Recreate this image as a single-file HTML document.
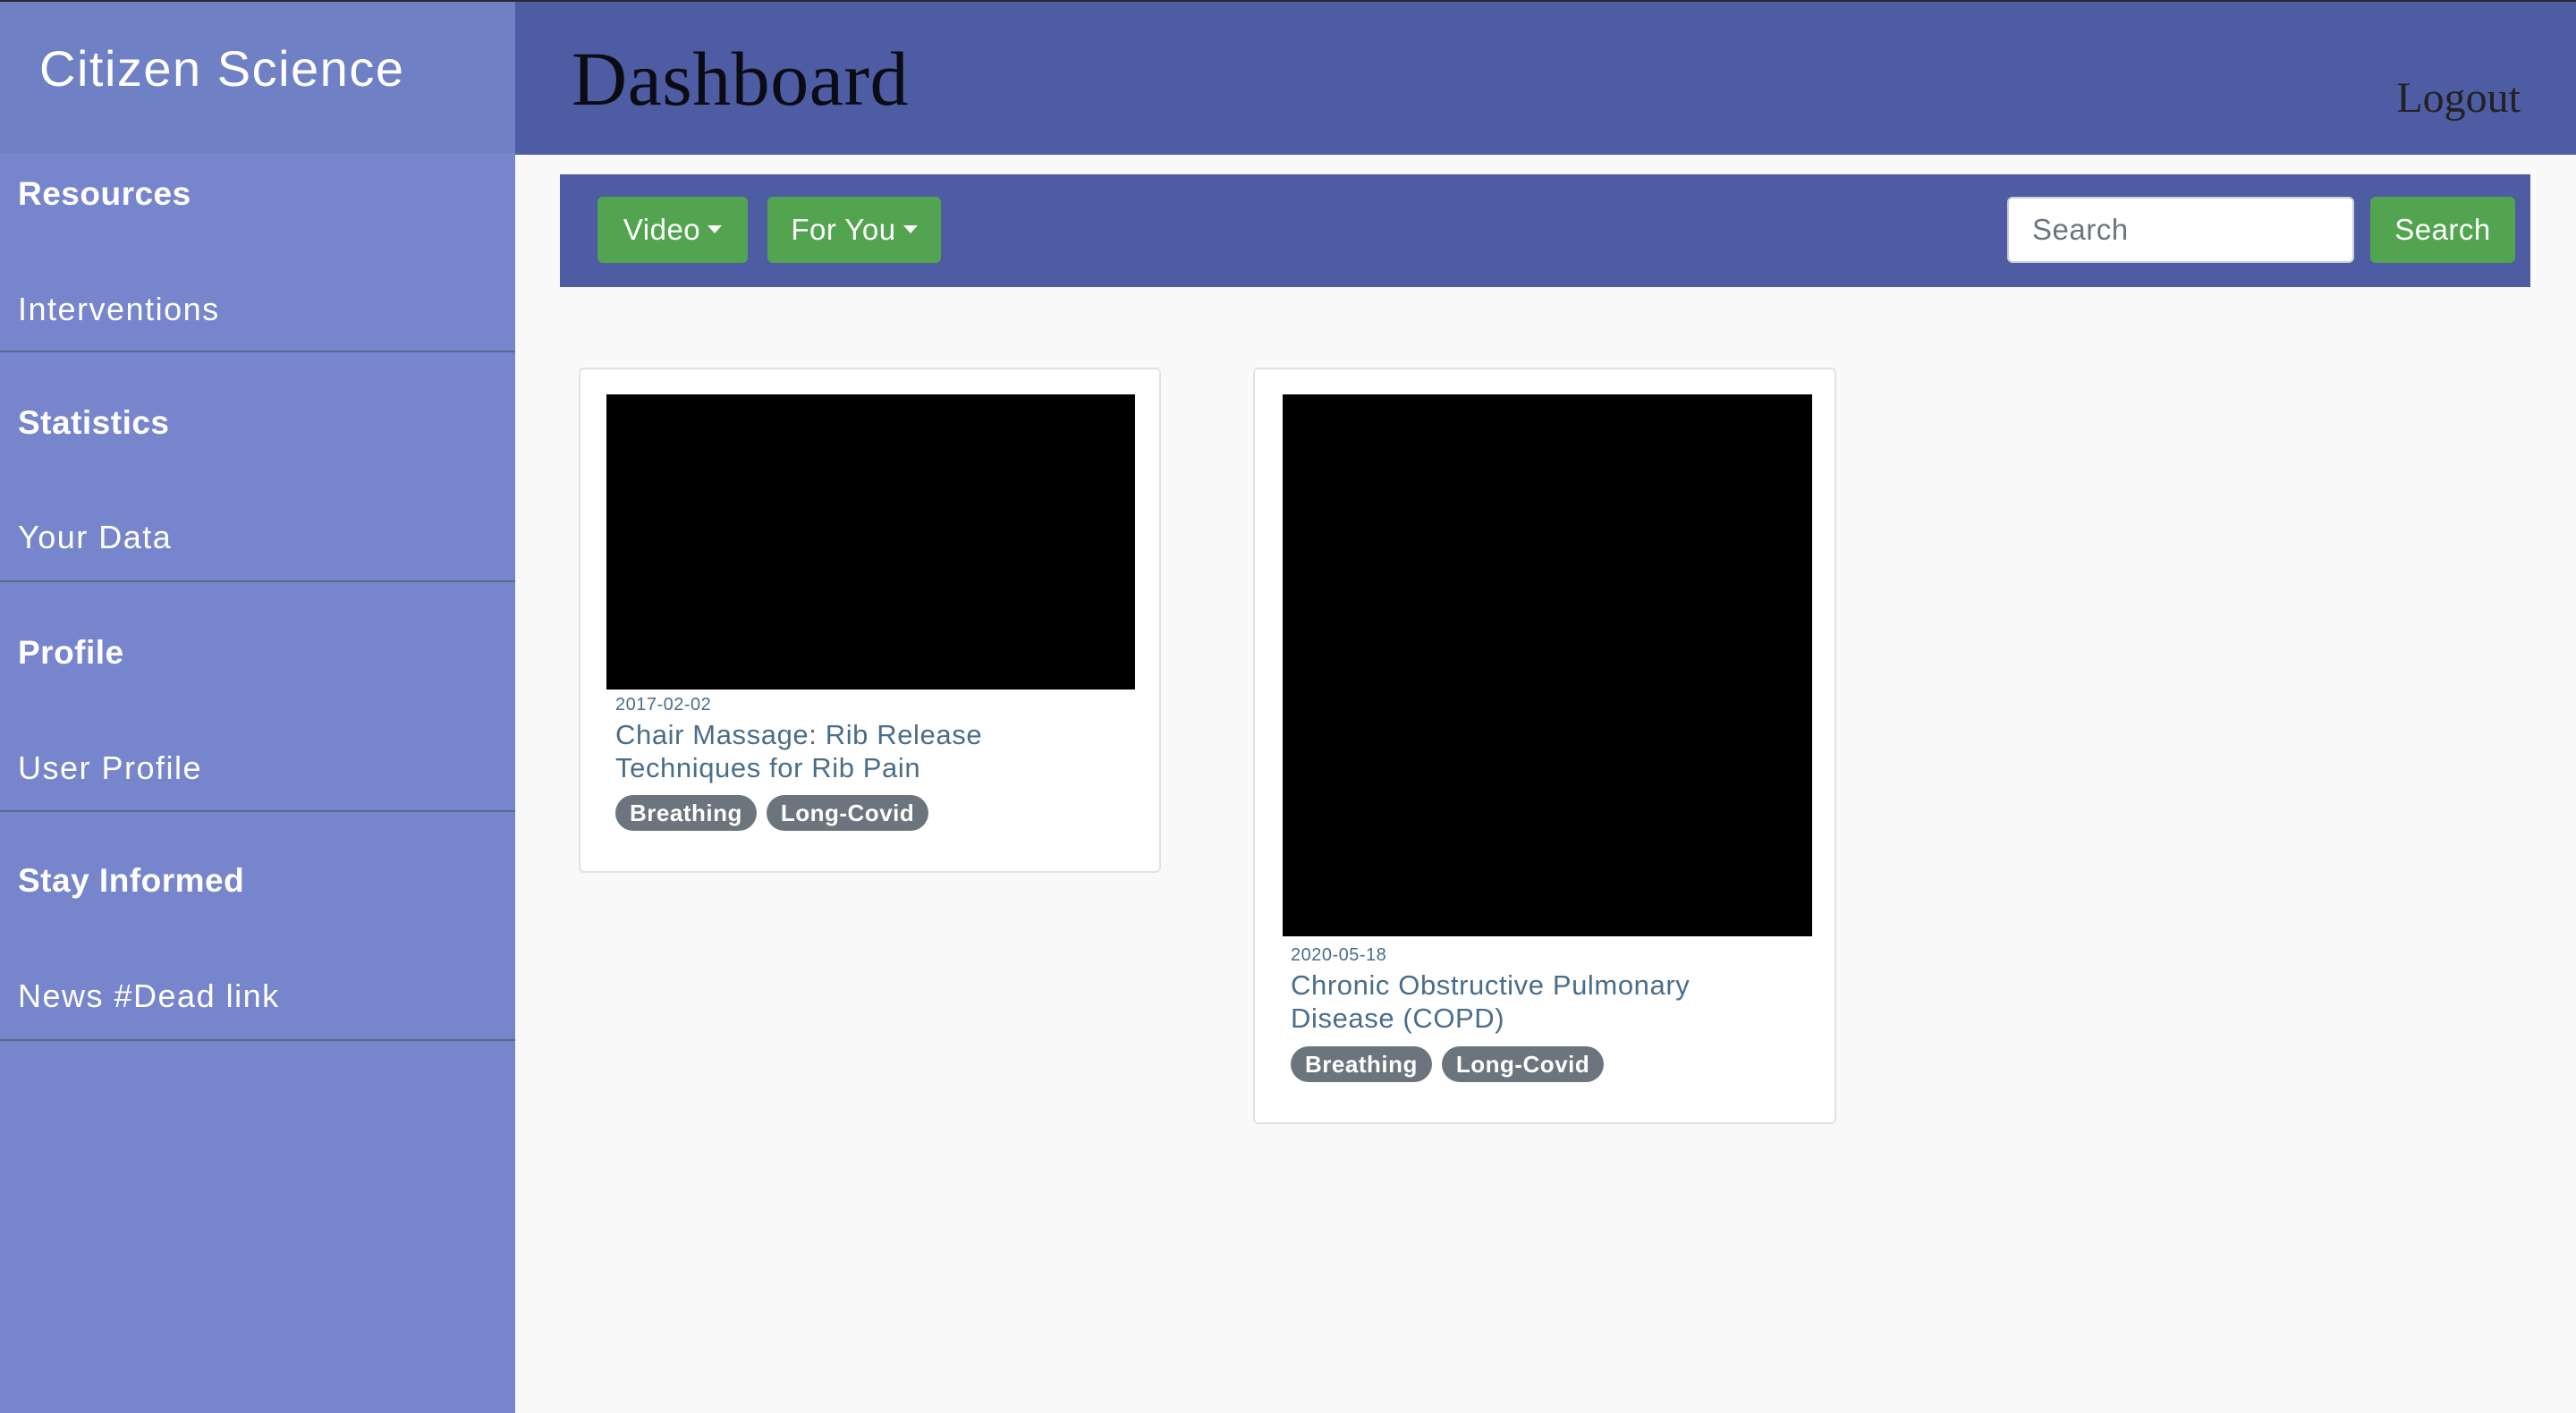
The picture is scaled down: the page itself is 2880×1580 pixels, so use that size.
<!DOCTYPE html>
<html><head><meta charset="utf-8"><style>
*{margin:0;padding:0;box-sizing:border-box}
body{width:2880px;height:1580px;overflow:hidden;background:#f9f9f9;font-family:"Liberation Sans",sans-serif;position:relative}
.a{position:absolute}
.topline{left:0;top:0;width:2880px;height:2px;background:#2a2a2a}
.side{left:0;top:2px;width:576px;height:1578px;background:#7786cc}
.brand{left:0;top:2px;width:576px;height:169px;background:#7080c4}
.brand span{position:absolute;left:44px;top:42px;color:#fff;font-size:56px;white-space:nowrap;letter-spacing:1.5px}
.hdr{left:576px;top:2px;width:2304px;height:171px;background:#4e5ca3}
.sb{color:#fff;font-weight:bold;font-size:37px;left:20px;white-space:nowrap;letter-spacing:0.5px}
.sr{color:#fff;font-size:36px;left:20px;white-space:nowrap;letter-spacing:1.5px}
.ln{left:0;width:576px;height:2px;background:#4f6d8c}
.dash{left:639px;top:38px;font-family:"Liberation Serif",serif;font-size:86px;color:#0b0b14;letter-spacing:0.5px}
.logout{right:62px;top:82px;font-family:"Liberation Serif",serif;font-size:48px;color:#222}
.bar{left:626px;top:195px;width:2203px;height:126px;background:#4e5ca3}
.btn{background:#52a450;color:#fff;border-radius:6px;font-size:33px;height:74px;top:220px;line-height:74px;text-align:center;letter-spacing:0.5px}
.caret{display:inline-block;width:0;height:0;border-left:8px solid transparent;border-right:8px solid transparent;border-top:9px solid #fff;vertical-align:middle;margin-left:8px;margin-top:-6px}
.inp{left:2244px;top:220px;width:388px;height:74px;background:#fff;border:2px solid #ccd;border-radius:6px;font-size:33px;color:#6c757d;padding-left:26px;line-height:70px;letter-spacing:0.5px}
.card{background:#fff;border:2px solid #e2e2e2;border-radius:6px}
.vid{background:#000}
.date{font-size:20px;color:#4a6d8a;letter-spacing:0.5px}
.title{font-size:31px;color:#4a6d8a;line-height:37px;width:470px;letter-spacing:0.6px}
.tags{display:flex;gap:11px}
.tag{background:#6c757d;color:#fff;font-weight:bold;font-size:26px;border-radius:20px;height:40px;line-height:40px;padding:0 16px;letter-spacing:0.5px}
</style></head><body>
<div class="a topline"></div>
<div class="a side"></div>
<div class="a brand"><span>Citizen Science</span></div>
<div class="a hdr"></div>

<div class="a sb" style="top:196px">Resources</div>
<div class="a sr" style="top:325px">Interventions</div>
<div class="a ln" style="top:392px"></div>
<div class="a sb" style="top:452px">Statistics</div>
<div class="a sr" style="top:580px">Your Data</div>
<div class="a ln" style="top:649px"></div>
<div class="a sb" style="top:709px">Profile</div>
<div class="a sr" style="top:838px">User Profile</div>
<div class="a ln" style="top:906px"></div>
<div class="a sb" style="top:964px">Stay Informed</div>
<div class="a sr" style="top:1093px">News #Dead link</div>
<div class="a ln" style="top:1162px"></div>

<div class="a dash">Dashboard</div>
<div class="a logout">Logout</div>

<div class="a bar"></div>
<div class="a btn" style="left:668px;width:168px">Video<span class="caret"></span></div>
<div class="a btn" style="left:858px;width:194px">For You<span class="caret"></span></div>
<div class="a inp">Search</div>
<div class="a btn" style="left:2650px;width:162px">Search</div>

<div class="a card" style="left:647px;top:411px;width:651px;height:565px"></div>
<div class="a vid" style="left:678px;top:441px;width:591px;height:330px"></div>
<div class="a date" style="left:688px;top:777px">2017-02-02</div>
<div class="a title" style="left:688px;top:803px">Chair Massage: Rib Release Techniques for Rib Pain</div>
<div class="a tags" style="left:688px;top:889px"><span class="tag">Breathing</span><span class="tag">Long-Covid</span></div>

<div class="a card" style="left:1401px;top:411px;width:652px;height:846px"></div>
<div class="a vid" style="left:1434px;top:441px;width:592px;height:606px"></div>
<div class="a date" style="left:1443px;top:1057px">2020-05-18</div>
<div class="a title" style="left:1443px;top:1083px">Chronic Obstructive Pulmonary Disease (COPD)</div>
<div class="a tags" style="left:1443px;top:1170px"><span class="tag">Breathing</span><span class="tag">Long-Covid</span></div>
</body></html>
